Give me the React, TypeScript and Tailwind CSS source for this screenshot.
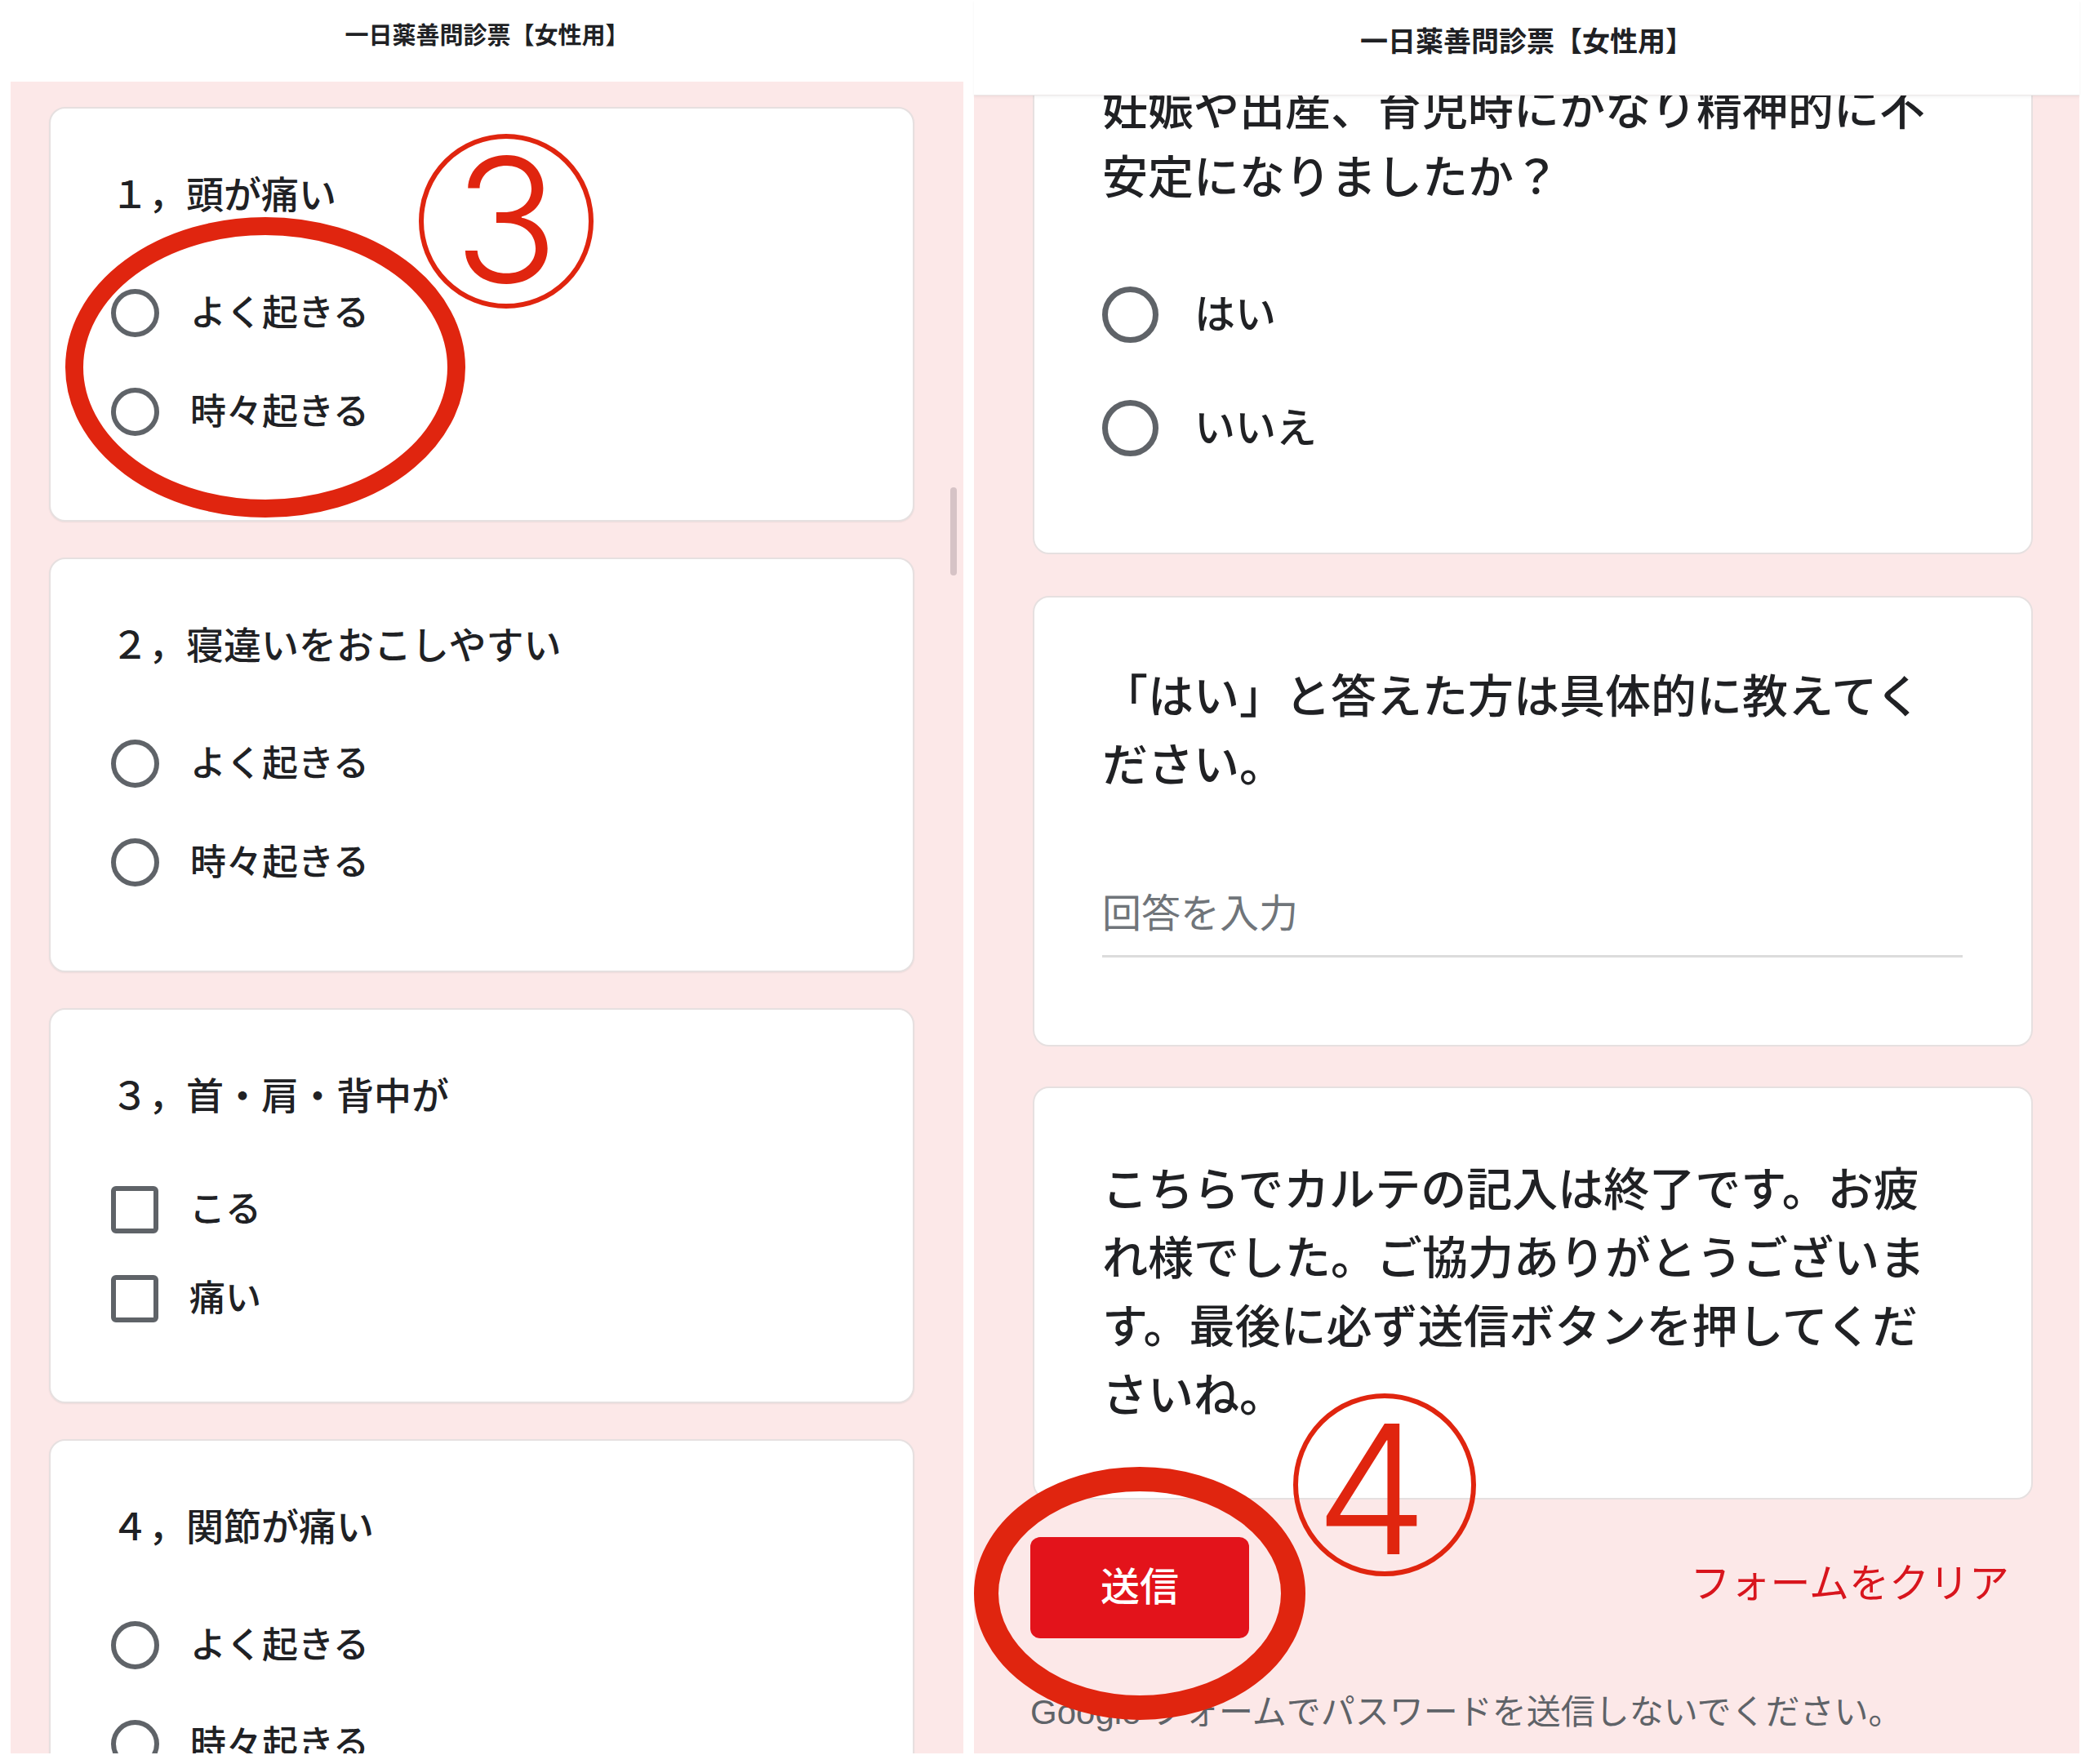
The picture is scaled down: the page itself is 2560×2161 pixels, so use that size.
const jp = "font-['Liberation_Sans','Noto_Sans_CJK_JP',sans-serif]";

function Radio({ big }: { big?: boolean }) {
  return big ? (
    <span className="shrink-0 w-[69px] h-[69px] rounded-full border-[7px] border-[#5f6368]" />
  ) : (
    <span className="shrink-0 w-[59px] h-[59px] rounded-full border-[6px] border-[#5f6368]" />
  );
}

function Check() {
  return <span className="shrink-0 w-[58px] h-[58px] rounded-[6px] border-[6px] border-[#5f6368]" />;
}

function LeftCard({ q, opts, check }: { q: string; opts: string[]; check?: boolean }) {
  return (
    <div className="shrink-0 bg-white rounded-[20px] border-2 border-[#e6e0e0] shadow-[0_1px_2px_rgba(0,0,0,0.06)] pl-[74px] pr-[40px] pt-[74px] pb-[72px]">
      <p className="text-[46px] leading-[64px]">{q}</p>
      <div className="mt-[52px]">
        {opts.map((o) => (
          <div key={o} className={check ? "flex items-center h-[109px]" : "flex items-center h-[121px]"}>
            {check ? <Check /> : <Radio />}
            <span className="ml-[38px] text-[44px] leading-[60px]">{o}</span>
          </div>
        ))}
      </div>
    </div>
  );
}

function LeftPanel() {
  return (
    <div className="w-[1167px] flex flex-col">
      <div className="h-[100px] shrink-0 flex items-center justify-center pb-[10px]">
        <h1 className="text-[29px] font-bold">一日薬善問診票【女性用】</h1>
      </div>
      <div className="relative flex-1 overflow-hidden bg-[#fce8e8] pl-[47px] pr-[60px] pt-[31px] flex flex-col gap-[44px] font-medium">
        <LeftCard q="１，頭が痛い" opts={["よく起きる", "時々起きる"]} />
        <LeftCard q="２，寝違いをおこしやすい" opts={["よく起きる", "時々起きる"]} />
        <LeftCard q="３，首・肩・背中が" opts={["こる", "痛い"]} check />
        <LeftCard q="４，関節が痛い" opts={["よく起きる", "時々起きる"]} />
        <span className="absolute right-[8px] top-[497px] w-[8px] h-[108px] rounded-full bg-[#d6c3c6]" />
      </div>
    </div>
  );
}

function RightPanel() {
  return (
    <div className="w-[1354px] flex flex-col">
      <div className="relative z-10 h-[117px] shrink-0 bg-white border-b border-[#ebe7e7] shadow-[0_2px_3px_rgba(0,0,0,0.05)] flex items-center justify-center pb-[14px]">
        <h1 className="text-[34px] font-bold">一日薬善問診票【女性用】</h1>
      </div>
      <div className="flex-1 overflow-hidden bg-[#fce8e8] pl-[72px] pr-[57px] font-medium">
        <div className="-mt-[109px] flex flex-col">
          <div className="shrink-0 bg-white rounded-[20px] border-2 border-[#e6e0e0] px-[83px] pt-[82px] pb-[83px]">
            <p className="text-[56px] leading-[84px]">
              妊娠や出産、育児時にかなり精神的に不
              <br />
              安定になりましたか？
            </p>
            <div className="mt-[56px]">
              {["はい", "いいえ"].map((o) => (
                <div key={o} className="flex items-center h-[139px]">
                  <Radio big />
                  <span className="ml-[44px] text-[50px] leading-[64px]">{o}</span>
                </div>
              ))}
            </div>
          </div>

          <div className="mt-[51px] shrink-0 bg-white rounded-[20px] border-2 border-[#e6e0e0] pl-[83px] pr-[84px] pt-[80px] pb-[107px]">
            <p className="text-[56px] leading-[84px]">
              「はい」と答えた方は具体的に教えてく
              <br />
              ださい。
            </p>
            <p className="mt-[110px] text-[48px] leading-[60px] text-[#70757a] font-normal">回答を入力</p>
            <div className="mt-[20px] h-[3px] bg-[#dcdcdc]" />
          </div>

          <div className="mt-[49px] shrink-0 bg-white rounded-[20px] border-2 border-[#e6e0e0] px-[83px] pt-[83px] pb-[83px]">
            <p className="text-[56px] leading-[84px]">
              こちらでカルテの記入は終了です。お疲
              <br />
              れ様でした。ご協力ありがとうございま
              <br />
              す。最後に必ず送信ボタンを押してくだ
              <br />
              さいね。
            </p>
          </div>

          <div className="mt-[46px] -ml-[3px] mr-[29px] flex items-center justify-between">
            <button className="w-[268px] h-[124px] rounded-[12px] bg-[#e3131b] text-white text-[48px] font-medium flex items-center justify-center">
              送信
            </button>
            <span className="text-[49px] text-[#d8151d] font-normal pb-[8px]">フォームをクリア</span>
          </div>

          <p className="mt-[63px] -ml-[3px] text-[42px] leading-[56px] text-[#5f6368] font-normal">
            Google フォームでパスワードを送信しないでください。
          </p>
        </div>
      </div>
    </div>
  );
}

function Annotations() {
  const red = "#e0250f";
  return (
    <svg width="2560" height="2161" className="absolute left-0 top-0 pointer-events-none">
      <ellipse cx="325" cy="450" rx="234" ry="173" fill="none" stroke={red} strokeWidth="22" />
      <circle cx="620" cy="271" r="104" fill="none" stroke={red} strokeWidth="6" />
      <text x="620" y="346" textAnchor="middle" fontSize="212" fontFamily="Inter, 'Liberation Sans', sans-serif" fontWeight="300" fill={red}>
        3
      </text>
      <circle cx="1696" cy="1819" r="109" fill="none" stroke={red} strokeWidth="6" />
      <text x="1680" y="1904" textAnchor="middle" fontSize="220" fontFamily="Inter, 'Liberation Sans', sans-serif" fontWeight="300" fill={red}>
        4
      </text>
      <ellipse cx="1396" cy="1952" rx="188" ry="140" fill="none" stroke={red} strokeWidth="30" />
    </svg>
  );
}

export default function App() {
  return (
    <div className={`relative w-[2560px] h-[2161px] bg-white flex gap-[13px] px-[13px] pb-[13px] text-[#202124] ${jp}`}>
      <LeftPanel />
      <RightPanel />
      <Annotations />
    </div>
  );
}
